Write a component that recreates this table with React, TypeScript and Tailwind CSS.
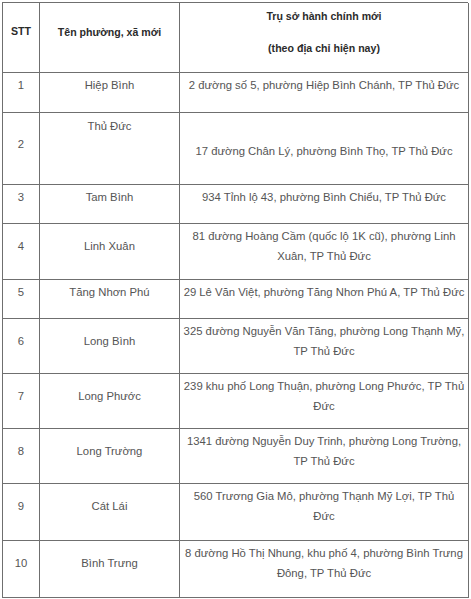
import React from "react"

type Row = {
  stt: string
  name: string
  address: string[]
}

const rows: Row[] = [
  { stt: "1", name: "Hiệp Bình", address: ["2 đường số 5, phường Hiệp Bình Chánh, TP Thủ Đức"] },
  { stt: "2", name: "Thủ Đức", address: ["17 đường Chân Lý, phường Bình Thọ, TP Thủ Đức"] },
  { stt: "3", name: "Tam Bình", address: ["934 Tỉnh lộ 43, phường Bình Chiểu, TP Thủ Đức"] },
  { stt: "4", name: "Linh Xuân", address: ["81 đường Hoàng Cầm (quốc lộ 1K cũ), phường Linh", "Xuân, TP Thủ Đức"] },
  { stt: "5", name: "Tăng Nhơn Phú", address: ["29 Lê Văn Việt, phường Tăng Nhơn Phú A, TP Thủ Đức"] },
  { stt: "6", name: "Long Bình", address: ["325 đường Nguyễn Văn Tăng, phường Long Thạnh Mỹ,", "TP Thủ Đức"] },
  { stt: "7", name: "Long Phước", address: ["239 khu phố Long Thuận, phường Long Phước, TP Thủ", "Đức"] },
  { stt: "8", name: "Long Trường", address: ["1341 đường Nguyễn Duy Trinh, phường Long Trường,", "TP Thủ Đức"] },
  { stt: "9", name: "Cát Lái", address: ["560 Trương Gia Mô, phường Thạnh Mỹ Lợi, TP Thủ", "Đức"] },
  { stt: "10", name: "Bình Trưng", address: ["8 đường Hồ Thị Nhung, khu phố 4, phường Bình Trưng", "Đông, TP Thủ Đức"] },
]

const cell = "border-r border-b border-[#6f6f6f] flex flex-col items-center"

export default function App() {
  return (
    <div className="min-h-screen bg-white pt-[2px] pl-[2px]" style={{ fontFamily: '"Liberation Sans", Arial, sans-serif' }}>
      <div className="w-[466px] border-l border-t border-[#6f6f6f] grid grid-cols-[37px_140px_289px] grid-rows-[70px_40px_72px_39px_56px_39px_55px_55px_55px_57px_57px] text-[11.3px] leading-[20px] text-[#555555]">
        {/* Header */}
        <div className={`${cell} pt-[18px] text-[10.6px] font-bold text-[#2b2b2b]`}>STT</div>
        <div className={`${cell} pt-[19px] text-[10.6px] font-bold text-[#2b2b2b]`}>Tên phường, xã mới</div>
        <div className={`${cell} pt-[3px] gap-[12px] text-[10.6px] font-bold text-[#2b2b2b]`}>
          <span>Trụ sở hành chính mới</span>
          <span>(theo địa chỉ hiện nay)</span>
        </div>

        {rows.map((row) => {
          if (row.stt === "2") {
            return (
              <React.Fragment key={row.stt}>
                <div className={`${cell} pt-[21px]`}>{row.stt}</div>
                <div className={`${cell} pt-[3px]`}>{row.name}</div>
                <div className={`${cell} pt-[28px] whitespace-nowrap`}>{row.address[0]}</div>
              </React.Fragment>
            )
          }
          const h = row.address.length > 1 ? "h-[40px]" : "h-[20px]"
          return (
            <React.Fragment key={row.stt}>
              <div className={`${cell} pt-[2px]`}>
                <div className={`${h} flex items-center`}>{row.stt}</div>
              </div>
              <div className={`${cell} pt-[2px]`}>
                <div className={`${h} flex items-center`}>{row.name}</div>
              </div>
              <div className={`${cell} pt-[2px] whitespace-nowrap`}>
                {row.address.map((line) => (
                  <span key={line}>{line}</span>
                ))}
              </div>
            </React.Fragment>
          )
        })}
      </div>
    </div>
  )
}
